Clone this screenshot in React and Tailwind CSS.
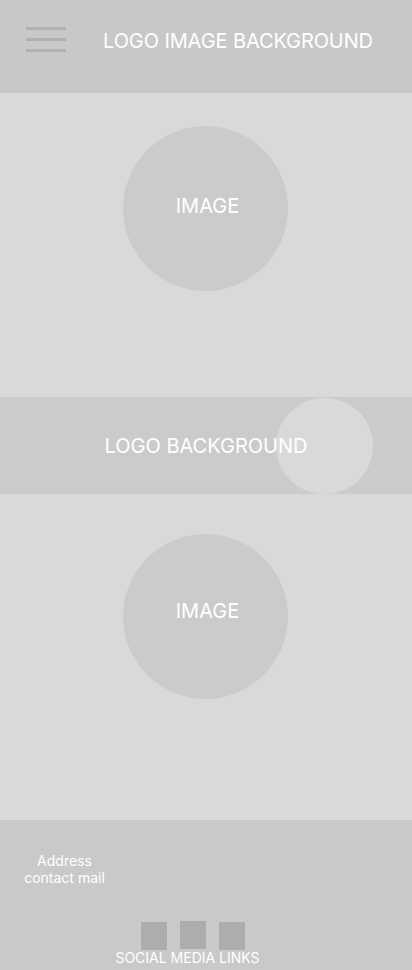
export default function App() {
  const font = { fontFamily: "Inter, 'Noto Sans', sans-serif" };
  return (
    <div className="w-[412px] h-[970px] flex flex-col bg-[#d9d9d9] text-white" style={font}>
      <header className="h-[93px] bg-[#c8c8c8] flex items-start shrink-0">
        <div className="ml-[26px] mt-[27px] w-[40px] flex flex-col gap-[8px]">
          <div className="h-[3px] bg-[#b0b0b0]" />
          <div className="h-[3px] bg-[#b0b0b0]" />
          <div className="h-[3px] bg-[#b0b0b0]" />
        </div>
        <div className="ml-[37px] mt-[29px] text-[20px] leading-[24px] tracking-[-0.1px]">LOGO IMAGE BACKGROUND</div>
      </header>
      <section className="h-[304px] bg-[#d9d9d9] flex justify-center shrink-0">
        <div className="mt-[33px] ml-[-1px] w-[165px] h-[165px] rounded-full bg-[#cbcbcb] flex items-center justify-center">
          <span className="text-[20px] leading-[24px] ml-[4px] mb-[5px]">IMAGE</span>
        </div>
      </section>
      <section className="h-[97px] bg-[#cbcbcb] relative flex items-center justify-center shrink-0">
        <div className="absolute left-[276px] top-[1px] w-[97px] h-[96px] rounded-full bg-[#d9d9d9]" />
        <span className="relative text-[20px] leading-[24px]">LOGO BACKGROUND</span>
      </section>
      <section className="h-[326px] bg-[#d9d9d9] flex justify-center shrink-0">
        <div className="mt-[40px] ml-[-1px] w-[165px] h-[165px] rounded-full bg-[#cbcbcb] flex items-center justify-center">
          <span className="text-[20px] leading-[24px] ml-[4px] mb-[11px]">IMAGE</span>
        </div>
      </section>
      <footer className="flex-1 bg-[#c9c9c9] flex flex-col">
        <div className="mt-[32px] ml-[24px] w-[81px] text-center text-[14px] leading-[17px]">
          <div>Address</div>
          <div className="whitespace-nowrap">contact mail</div>
        </div>
        <div className="mt-[35px] flex justify-center gap-[13px] ml-[-26px] items-start">
          <div className="w-[26px] h-[28px] bg-[#adadad] mt-[1px]" />
          <div className="w-[26px] h-[28px] bg-[#adadad]" />
          <div className="w-[26px] h-[28px] bg-[#adadad] mt-[1px]" />
        </div>
        <div className="mt-[0px] text-center text-[14px] leading-[16px] ml-[-37px]">SOCIAL MEDIA LINKS</div>
      </footer>
    </div>
  );
}
